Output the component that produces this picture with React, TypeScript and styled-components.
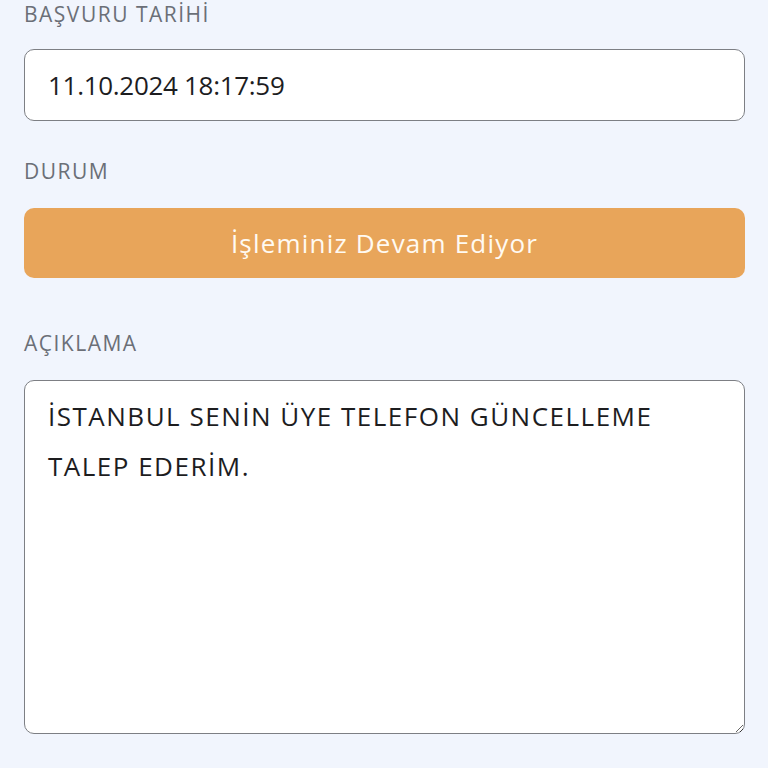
import React from "react";
import styled, { createGlobalStyle } from "styled-components";

const Global = createGlobalStyle`
  html, body { margin: 0; padding: 0; background: #f1f5fd; }
  body { font-family: "Open Sans", "Noto Sans", sans-serif; }
`;

const Page = styled.div`
  display: flex;
  flex-direction: column;
  padding: 0 23px 0 24px;
  min-height: 768px;
  box-sizing: border-box;
`;

const Label = styled.div<{ $mt: number }>`
  margin-top: ${(p) => p.$mt}px;
  font-size: 21px;
  line-height: 28px;
  color: #6b6f77;
  letter-spacing: 1.5px;
`;

const Field = styled.div`
  margin-top: 21px;
  height: 72px;
  box-sizing: border-box;
  background: #ffffff;
  border: 1.5px solid #7d7f84;
  border-radius: 10px;
  display: flex;
  align-items: center;
  padding: 0 23px;
  font-size: 26px;
  color: #1d1d1f;
  letter-spacing: -0.3px;
`;

const Status = styled.div`
  margin-top: 23px;
  height: 70px;
  border-radius: 10px;
  background: #e8a55a;
  color: #fffaf2;
  display: flex;
  align-items: center;
  justify-content: center;
  font-size: 26px;
  letter-spacing: 1.2px;
`;

const Area = styled.textarea`
  margin-top: 23px;
  height: 354px;
  box-sizing: border-box;
  background: #ffffff;
  border: 1.5px solid #7d7f84;
  border-radius: 10px;
  padding: 10px 23px;
  font-family: "Open Sans", "Noto Sans", sans-serif;
  font-size: 26px;
  line-height: 50px;
  color: #1d1d1f;
  resize: vertical;
  outline: none;
  letter-spacing: 1.5px;
`;

export default function App() {
  return (
    <>
      <Global />
      <Page>
        <Label $mt={0}>BAŞVURU TARİHİ</Label>
        <Field>11.10.2024 18:17:59</Field>
        <Label $mt={36}>DURUM</Label>
        <Status>İşleminiz Devam Ediyor</Status>
        <Label $mt={51}>AÇIKLAMA</Label>
        <Area readOnly value="İSTANBUL SENİN ÜYE TELEFON GÜNCELLEME TALEP EDERİM." />
      </Page>
    </>
  );
}
